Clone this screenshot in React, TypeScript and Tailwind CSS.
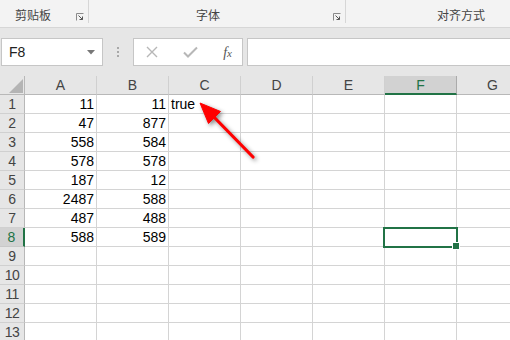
import React from 'react';

const cols = ['A', 'B', 'C', 'D', 'E', 'F', 'G'];

// A / B values per row, row 1 also has "true" in C
const data: [string, string][] = [
  ['11', '11'],
  ['47', '877'],
  ['558', '584'],
  ['578', '578'],
  ['187', '12'],
  ['2487', '588'],
  ['487', '488'],
  ['588', '589'],
];

const font = { fontFamily: '"Liberation Sans", "Noto Sans CJK SC", sans-serif' };

const Launcher = () => (
  <svg width="8" height="8" viewBox="0 0 8 8" className="mb-[1px]">
    <path d="M0.5 7.5V0.5H7.5" fill="none" stroke="#8a8a8a" strokeWidth="1" />
    <path d="M2.5 2.5L6.5 6.5M6.5 3.5V6.5H3.5" fill="none" stroke="#555" strokeWidth="1" />
  </svg>
);

const Ribbon = () => (
  <div className="h-[28px] bg-[#f3f3f3] border-b border-[#d6d6d6] flex text-[12px] text-[#444]" style={font}>
    <div className="w-[89px] border-r border-[#d6d6d6] mb-[4px] flex items-end justify-between pl-[15px] pr-[4px] pb-[1px]">
      <span className="leading-none">剪贴板</span>
      <Launcher />
    </div>
    <div className="w-[257px] border-r border-[#d6d6d6] mb-[4px] flex items-end justify-between pl-[107px] pr-[4px] pb-[1px]">
      <span className="leading-none">字体</span>
      <Launcher />
    </div>
    <div className="flex-1 flex items-end pl-[91px] pb-[5px]">
      <span className="leading-none">对齐方式</span>
    </div>
  </div>
);

const FormulaBar = () => (
  <div className="h-[48px] bg-[#e6e6e6] flex items-start pt-[10px] pl-[1px]" style={font}>
    <div className="w-[102px] h-[28px] bg-white border border-[#c6c6c6] flex items-center justify-between pl-[7px] pr-[7px] text-[14px] text-[#222]">
      <span>F8</span>
      <svg width="8" height="5" viewBox="0 0 8 5"><path d="M0 0H8L4 4.5Z" fill="#777" /></svg>
    </div>
    <div className="w-[30px] h-[28px] flex flex-col items-center justify-center gap-[2px]">
      <div className="w-[2px] h-[2px] bg-[#a8a8a8]" />
      <div className="w-[2px] h-[2px] bg-[#a8a8a8]" />
      <div className="w-[2px] h-[2px] bg-[#a8a8a8]" />
    </div>
    <div className="w-[110px] h-[28px] bg-white border border-[#c6c6c6] flex items-center justify-between pl-[12px] pr-[10px]">
      <svg width="12" height="12" viewBox="0 0 12 12">
        <path d="M1 1L11 11M11 1L1 11" stroke="#b7b7b7" strokeWidth="1.4" />
      </svg>
      <svg width="15" height="12" viewBox="0 0 15 12">
        <path d="M1 6.5L5 10.5L14 1.5" fill="none" stroke="#b7b7b7" strokeWidth="2" />
      </svg>
      <span className="text-[14px] italic text-[#555]" style={{ fontFamily: '"Liberation Serif", serif' }}>
        f<span className="text-[11px]">x</span>
      </span>
    </div>
    <div className="ml-[4px] flex-1 h-[28px] bg-white border border-[#c6c6c6] border-r-0" />
  </div>
);

const Sheet = () => (
  <div className="relative grid grid-cols-[25px_repeat(7,72px)] bg-white text-[14px]" style={font}>
    {/* header row */}
    <div className="h-[19px] bg-[#e6e6e6] border-r border-b border-[#b8b8b8] relative">
      <svg width="14" height="14" viewBox="0 0 14 14" className="absolute right-[1px] bottom-[1px]">
        <path d="M14 0V14H0Z" fill="#b4b4b4" />
      </svg>
    </div>
    {cols.map((c) =>
      c === 'F' ? (
        <div key={c} className="h-[19px] bg-[#d2d2d2] border-r border-[#ababab] border-b-2 border-b-[#217346] flex items-center justify-center text-[#217346] leading-none">
          {c}
        </div>
      ) : (
        <div key={c} className="h-[19px] bg-[#e6e6e6] border-r border-[#d0d0d0] border-b border-b-[#b8b8b8] flex items-center justify-center text-[#444] leading-none">
          {c}
        </div>
      )
    )}

    {Array.from({ length: 13 }, (_, i) => {
      const row = i + 1;
      const vals = data[i];
      return (
        <React.Fragment key={row}>
          {row === 8 ? (
            <div className="h-[19px] bg-[#d2d2d2] border-r-2 border-r-[#217346] border-b border-b-[#c8c8c8] flex items-center justify-center text-[#217346] leading-none">
              {row}
            </div>
          ) : (
            <div className="h-[19px] bg-[#e6e6e6] border-r border-r-[#b8b8b8] border-b border-b-[#d0d0d0] flex items-center justify-center text-[#444] leading-none tracking-[-0.5px]">
              {row}
            </div>
          )}
          {cols.map((c, ci) => (
            <div
              key={c}
              className={
                'h-[19px] border-r border-b border-[#d4d4d4] flex items-center leading-none text-black ' +
                (ci < 2 ? 'justify-end pr-[2px]' : 'justify-start pl-[2px]')
              }
            >
              {ci < 2 && vals ? vals[ci] : ci === 2 && row === 1 ? 'true' : ''}
            </div>
          ))}
        </React.Fragment>
      );
    })}

    {/* active cell F8 */}
    <div className="absolute left-[383px] top-[151px] w-[75px] h-[21px] border-2 border-[#217346]" />
    <div className="absolute left-[452px] top-[166px] w-[8px] h-[8px] bg-white" />
    <div className="absolute left-[453px] top-[167px] w-[6px] h-[6px] bg-[#217346]" />
  </div>
);

const Arrow = () => (
  <svg
    className="absolute left-0 top-0 pointer-events-none"
    width="510"
    height="340"
    style={{ filter: 'drop-shadow(2px 2px 2px rgba(0,0,0,0.45))' }}
  >
    <path d="M253 157L210 113" stroke="#ff0000" strokeWidth="3.2" strokeLinecap="round" />
    <path d="M200 103L220.5 111.5L208.5 123.5Z" fill="#ff0000" stroke="#ff0000" strokeWidth="1" strokeLinejoin="round" />
  </svg>
);

export default function App() {
  return (
    <div className="relative w-[510px] h-[340px] overflow-hidden bg-white">
      <Ribbon />
      <FormulaBar />
      <Sheet />
      <Arrow />
    </div>
  );
}
